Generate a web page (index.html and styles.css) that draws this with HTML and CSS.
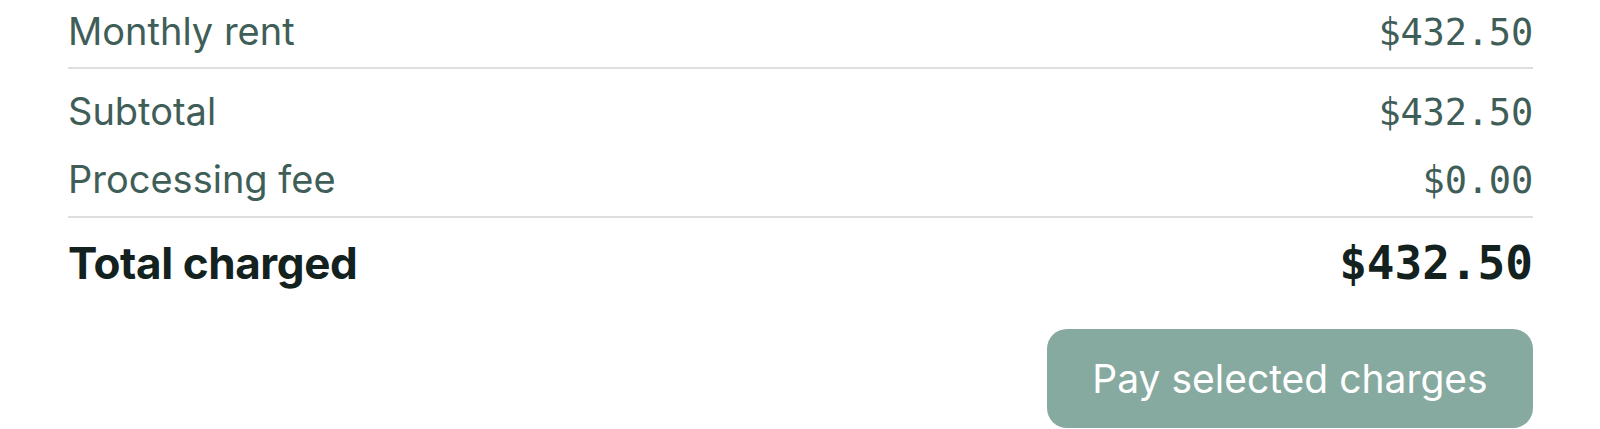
FILE: index.html
```html
<!DOCTYPE html>
<html lang="en">
<head>
<meta charset="utf-8">
<title>Payment summary</title>
<link rel="stylesheet" href="styles.css">
</head>
<body>
<main class="summary">
  <section class="items">
    <div class="row">
      <span class="label">Monthly rent</span>
      <span class="amount">$432.50</span>
    </div>
  </section>
  <section class="subtotals">
    <div class="row row-sub">
      <span class="label">Subtotal</span>
      <span class="amount">$432.50</span>
    </div>
    <div class="row row-sub">
      <span class="label">Processing fee</span>
      <span class="amount">$0.00</span>
    </div>
  </section>
  <section class="total">
    <div class="row row-total">
      <span class="label">Total charged</span>
      <span class="amount">$432.50</span>
    </div>
  </section>
  <div class="actions">
    <button class="pay-btn" type="button">Pay selected charges</button>
  </div>
</main>
</body>
</html>
```

FILE: styles.css
```css
html, body {
  margin: 0;
  padding: 0;
  background: #ffffff;
}

body {
  font-family: "Inter", "Liberation Sans", sans-serif;
  color: #3f5e58;
  overflow: hidden;
}

.summary {
  padding: 4px 67px 0 68px;
}

.row {
  display: flex;
  justify-content: space-between;
  align-items: baseline;
  font-size: 38px;
  line-height: 54px;
}

.label {
  letter-spacing: 0;
}

.amount {
  font-family: "DejaVu Sans Mono", "Liberation Mono", monospace;
  font-size: 37px;
  letter-spacing: -0.2px;
}

.items {
  padding-bottom: 7px;
  border-bottom: 2px solid #dcdfde;
}

.subtotals {
  padding-top: 9px;
  padding-bottom: 2px;
  border-bottom: 2px solid #dcdfde;
}

.row-sub {
  line-height: 67px;
}

.total {
  padding-top: 15px;
}

.row-total {
  color: #13221f;
  font-weight: 700;
  font-size: 44px;
  line-height: 60px;
}

.row-total .label {
  letter-spacing: -0.4px;
}

.row-total .amount {
  font-size: 46px;
  font-weight: 700;
  letter-spacing: 0;
}

.actions {
  display: flex;
  justify-content: flex-end;
  padding-top: 36px;
}

.pay-btn {
  font-family: "Inter", "Liberation Sans", sans-serif;
  font-size: 39px;
  letter-spacing: 0;
  color: #ffffff;
  background: #87aaa0;
  border: none;
  border-radius: 20px;
  width: 486px;
  height: 99px;
  padding: 0;
}
```
